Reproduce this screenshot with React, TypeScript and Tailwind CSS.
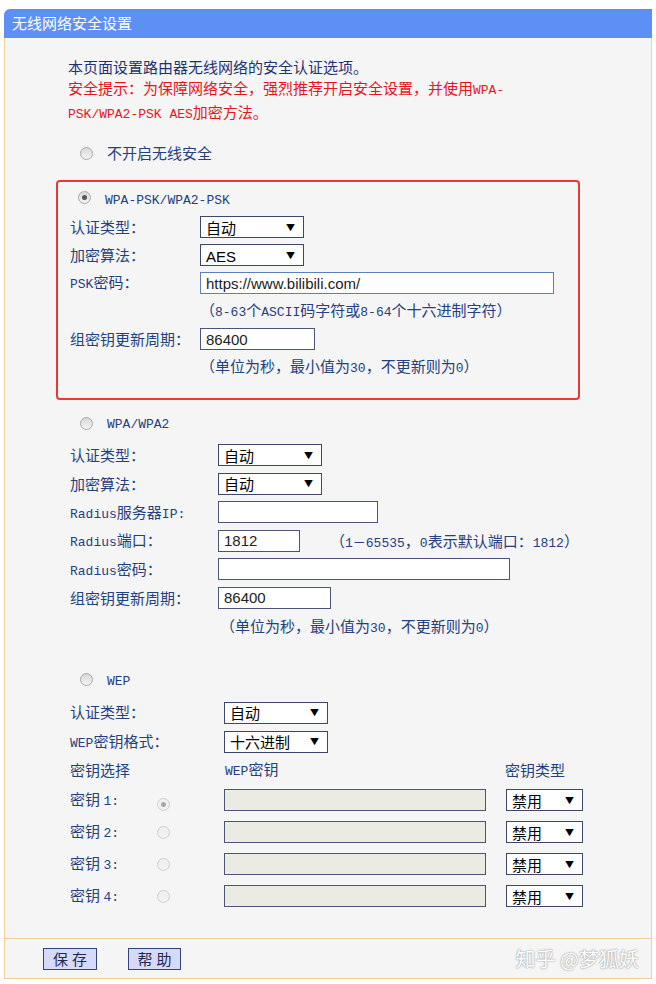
import React from 'react';

const cjk = "font-['Noto_Sans_CJK_SC',sans-serif]";

// half-width ASCII, like the router's SimSun latin glyphs
const A: React.FC<{ children: React.ReactNode }> = ({ children }) => (
  <span className="font-['Liberation_Mono','Noto_Sans_CJK_SC',monospace] text-[13px]">{children}</span>
);

const Radio: React.FC<{ checked?: boolean; disabled?: boolean }> = ({ checked, disabled }) => (
  <span
    className={`inline-flex items-center justify-center w-[13px] h-[13px] rounded-full border shrink-0 ${
      disabled ? 'border-[#cfcfcf] bg-[#f1f1f1]' : 'border-[#a9a9a9] bg-gradient-to-b from-[#d8d8d8] to-[#f4f4f4]'
    }`}
  >
    {checked && <span className={`w-[5px] h-[5px] rounded-full ${disabled ? 'bg-[#a8a8a8]' : 'bg-[#555]'}`} />}
  </span>
);

const Select: React.FC<{ value: string; w: string }> = ({ value, w }) => (
  <div className={`${w} h-[22px] bg-white border-[1.5px] border-[#3b4868] flex items-center justify-between pl-[5px] pr-[8px]`}>
    <span className="font-['Liberation_Sans','Noto_Sans_CJK_SC',sans-serif] text-[15px] text-black leading-none pt-[2px]">{value}</span>
    <span className="text-[9px] text-black leading-none">▼</span>
  </div>
);

const Input: React.FC<{ value?: string; w: string; grey?: boolean; blue?: boolean }> = ({ value, w, grey, blue }) => (
  <div
    className={`${w} h-[22px] border-[1.5px] flex items-center pl-[5px] ${
      grey ? 'bg-[#ebebe3] border-[#4a5577]' : 'bg-white'
    } ${blue ? 'border-[#5d7fc0]' : grey ? '' : 'border-[#4a5577]'}`}
  >
    <span className="font-['Liberation_Sans',sans-serif] text-[15px] text-[#222] leading-none">{value}</span>
  </div>
);

const Row: React.FC<{ label?: React.ReactNode; lw: string; h: string; children?: React.ReactNode }> = ({ label, lw, h, children }) => (
  <div className={`flex items-center ${h}`}>
    <div className={`${lw} shrink-0 text-[15px] text-[#24407e]`}>{label}</div>
    {children}
  </div>
);

const Hint: React.FC<{ children: React.ReactNode }> = ({ children }) => (
  <span className="text-[15px] text-[#24407e] whitespace-nowrap">{children}</span>
);

const RadioRow: React.FC<{ checked?: boolean; children: React.ReactNode; h: string }> = ({ checked, children, h }) => (
  <div className={`flex items-center gap-[14px] pl-[10px] ${h}`}>
    <Radio checked={checked} />
    <span className="text-[#24407e] text-[15px]">{children}</span>
  </div>
);

export default function App() {
  return (
    <div className={`w-[656px] h-[984px] bg-white pt-[9px] px-[4px] ${cjk}`}>
      <div className="relative w-[648px] h-[970px] flex flex-col">
        {/* title bar */}
        <div className="h-[29px] bg-[#5d8ff5] rounded-tl-[6px] flex items-center pl-[8px]">
          <span className="text-white text-[15px]">无线网络安全设置</span>
        </div>

        <div className="flex-1 flex flex-col border-x border-[#f2cd96] bg-[#f5f5f5] pl-[65px] pt-[18px]">
          <div className="text-[15px] leading-[21px] -ml-[2px]">
            <div className="text-[#1e3270]">本页面设置路由器无线网络的安全认证选项。</div>
            <div className="text-[#e8141e]">
              安全提示：为保障网络安全，强烈推荐开启安全设置，并使用<A>WPA-</A>
            </div>
            <div className="text-[#e8141e]">
              <A>PSK/WPA2-PSK AES</A>加密方法。
            </div>
          </div>

          <div className="mt-[17px]">
            <RadioRow h="h-[22px]">不开启无线安全</RadioRow>
          </div>

          {/* WPA-PSK/WPA2-PSK, marked in red */}
          <div className="mt-[16px] -ml-[14px] w-[524px] border-[2.5px] border-[#e53935] rounded-[4px] pl-[12px] pb-[17px]">
            <div className="h-[31px] flex items-center -ml-[2px]">
              <div className="flex items-center gap-[14px] pl-[10px]">
                <Radio checked />
                <span className="text-[#24407e]"><A>WPA-PSK/WPA2-PSK</A></span>
              </div>
            </div>
            <Row lw="w-[130px]" h="h-[28px]" label="认证类型：">
              <Select value="自动" w="w-[104px]" />
            </Row>
            <Row lw="w-[130px]" h="h-[28px]" label="加密算法：">
              <Select value="AES" w="w-[104px]" />
            </Row>
            <Row lw="w-[130px]" h="h-[28px]" label={<><A>PSK</A>密码：</>}>
              <Input value="https://www.bilibili.com/" w="w-[354px]" blue />
            </Row>
            <Row lw="w-[130px]" h="h-[28px]">
              <Hint>（<A>8-63</A>个<A>ASCII</A>码字符或<A>8-64</A>个十六进制字符）</Hint>
            </Row>
            <Row lw="w-[130px]" h="h-[28px]" label="组密钥更新周期：">
              <Input value="86400" w="w-[115px]" />
            </Row>
            <Row lw="w-[130px]" h="h-[28px]">
              <Hint>（单位为秒，最小值为<A>30</A>，不更新则为<A>0</A>）</Hint>
            </Row>
          </div>

          {/* WPA/WPA2 */}
          <div className="mt-[11px]">
            <RadioRow h="h-[24px]"><A>WPA/WPA2</A></RadioRow>
          </div>
          <div className="mt-[6px]">
            <Row lw="w-[148px]" h="h-[28.5px]" label="认证类型：">
              <Select value="自动" w="w-[104px]" />
            </Row>
            <Row lw="w-[148px]" h="h-[28.5px]" label="加密算法：">
              <Select value="自动" w="w-[104px]" />
            </Row>
            <Row lw="w-[148px]" h="h-[28.5px]" label={<><A>Radius</A>服务器<A>IP:</A></>}>
              <Input w="w-[160px]" />
            </Row>
            <Row lw="w-[148px]" h="h-[28.5px]" label={<><A>Radius</A>端口：</>}>
              <Input value="1812" w="w-[82px]" />
              <span className="ml-[30px]">
                <Hint>（<A>1－65535</A>，<A>0</A>表示默认端口：<A>1812</A>）</Hint>
              </span>
            </Row>
            <Row lw="w-[148px]" h="h-[28.5px]" label={<><A>Radius</A>密码：</>}>
              <Input w="w-[292px]" />
            </Row>
            <Row lw="w-[148px]" h="h-[28.5px]" label="组密钥更新周期：">
              <Input value="86400" w="w-[113px]" />
            </Row>
            <Row lw="w-[150px]" h="h-[28.5px]">
              <Hint>（单位为秒，最小值为<A>30</A>，不更新则为<A>0</A>）</Hint>
            </Row>
          </div>

          {/* WEP */}
          <div className="mt-[27px]">
            <RadioRow h="h-[24px]"><A>WEP</A></RadioRow>
          </div>
          <div className="mt-[6.5px]">
            <Row lw="w-[154px]" h="h-[29px]" label="认证类型：">
              <Select value="自动" w="w-[104px]" />
            </Row>
            <Row lw="w-[154px]" h="h-[29px]" label={<><A>WEP</A>密钥格式：</>}>
              <Select value="十六进制" w="w-[104px]" />
            </Row>
            <div className="flex items-center h-[28px] text-[15px] text-[#24407e]">
              <div className="w-[155px] shrink-0">密钥选择</div>
              <div className="w-[280px] shrink-0"><A>WEP</A>密钥</div>
              <div>密钥类型</div>
            </div>
            {[1, 2, 3, 4].map((n) => (
              <div key={n} className="flex items-center h-[32px]">
                <div className="w-[87px] shrink-0 text-[15px] text-[#24407e]">
                  密钥 <A>{n}:</A>
                </div>
                <div className="w-[67px] shrink-0">
                  <Radio checked={n === 1} disabled />
                </div>
                <Input w="w-[262px]" grey />
                <div className="ml-[20px]">
                  <Select value="禁用" w="w-[77px]" />
                </div>
              </div>
            ))}
          </div>
        </div>

        {/* footer */}
        <div className="h-[41px] border border-[#f2cd96] bg-[#f5f5f5] flex items-center pl-[38px] gap-[31px]">
          <button className="w-[54px] h-[22px] bg-[#d6daf8] border-[1.5px] border-[#34427a] text-[15px] text-[#1e2a55] tracking-[4px] pl-[4px] leading-none">
            保存
          </button>
          <button className="w-[53px] h-[22px] bg-[#d6daf8] border-[1.5px] border-[#34427a] text-[15px] text-[#1e2a55] tracking-[4px] pl-[4px] leading-none">
            帮助
          </button>
          <span className="ml-auto mr-[12px] text-[20px] text-white [text-shadow:0_0_2px_#9a9a9a,0_0_1px_#9a9a9a]">
            知乎 @梦狐妖
          </span>
        </div>
      </div>
    </div>
  );
}
